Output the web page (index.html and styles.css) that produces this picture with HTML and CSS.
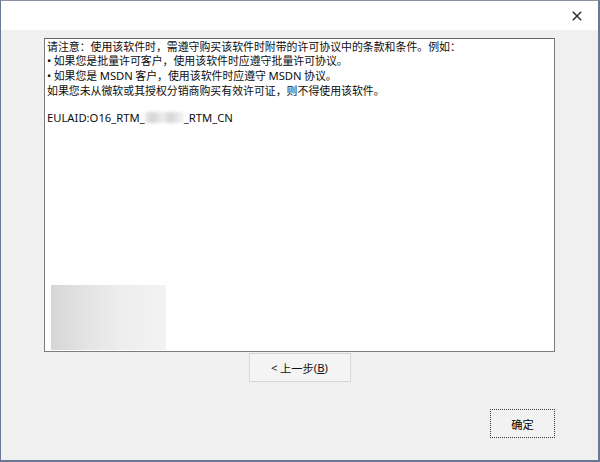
FILE: index.html
```html
<!DOCTYPE html>
<html lang="zh-CN">
<head>
<meta charset="utf-8">
<title>许可协议</title>
<link rel="stylesheet" href="styles.css">
</head>
<body>
<div class="window">
  <div class="titlebar">
    <button class="close" aria-label="关闭">
      <svg width="10" height="10" viewBox="0 0 10 10"><path d="M0.8 0.8 L9.2 9.2 M9.2 0.8 L0.8 9.2" stroke="#2b2b2b" stroke-width="1.4" fill="none"/></svg>
    </button>
  </div>
  <div class="content">
    <div class="textbox">
      <div class="text">
        <p>请注意：使用该软件时，需遵守购买该软件时附带的许可协议中的条款和条件。例如：</p>
        <p><span class="latin">•</span> 如果您是批量许可客户，使用该软件时应遵守批量许可协议。</p>
        <p><span class="latin">•</span> 如果您是 <span class="latin">MSDN</span> 客户，使用该软件时应遵守 <span class="latin">MSDN</span> 协议。</p>
        <p>如果您未从微软或其授权分销商购买有效许可证，则不得使用该软件。</p>
        <p class="blank">&nbsp;</p>
        <p class="latin">EULAID:O16_RTM_<span class="redacted"></span>_RTM_CN</p>
      </div>
      <div class="picture"></div>
    </div>
    <div class="nav-row">
      <button class="btn back"><span class="latin">&lt;</span> 上一步<span class="latin">(<u>B</u>)</span></button>
    </div>
    <div class="footer">
      <button class="btn ok">确定</button>
    </div>
  </div>
</div>
</body>
</html>
```

FILE: styles.css
```css
* { box-sizing: border-box; }
html, body { margin: 0; padding: 0; }
body {
  width: 600px;
  height: 462px;
  background: #f0f0f0;
  font-family: "Noto Sans CJK SC", "Noto Sans", sans-serif;
  color: #111;
}
.window {
  width: 600px;
  height: 462px;
  display: flex;
  flex-direction: column;
  border: 1px solid #6b7894;
  border-right-width: 2px;
  border-bottom-width: 2px;
  border-top-color: #8a93a3;
  background: #f0f0f0;
}
.titlebar {
  height: 29px;
  flex: none;
  background: #ffffff;
  display: flex;
  justify-content: flex-end;
  align-items: center;
  padding-right: 16px;
}
.close {
  border: 0;
  background: transparent;
  padding: 0;
  width: 10px;
  height: 10px;
  display: flex;
}
.content {
  flex: 1;
  display: flex;
  flex-direction: column;
  padding: 8px 43px 0 43px;
}
.textbox {
  height: 314px;
  flex: none;
  background: #ffffff;
  border: 1px solid #7c7c7c;
  border-top-color: #666;
  display: flex;
  flex-direction: column;
}
.text {
  padding: 0 0 0 2px;
  font-size: 10.9px;
  line-height: 14px;
  color: #0d0d0d;
  text-spacing-trim: space-all;
}
.text p { margin: 0; white-space: nowrap; }
.latin { font-family: "Noto Sans", "Noto Sans CJK SC", sans-serif; }
.text .latin { font-size: 11.25px; }
.redacted {
  display: inline-block;
  width: 39px;
  height: 11px;
  vertical-align: -1px;
  background: linear-gradient(to right, #e8e8e8 0%, #d4d4d4 20%, #eeeeee 45%, #d6d6d6 65%, #e4e4e4 80%, #f4f4f4 100%);
  filter: blur(1.6px);
}
.picture {
  margin-top: auto;
  margin-left: 6px;
  margin-bottom: 1px;
  width: 115px;
  height: 65px;
  background: linear-gradient(to right, #d6d6d6 0%, #e3e3e3 30%, #ededed 60%, #f3f3f3 100%);
}
.nav-row {
  display: flex;
  justify-content: center;
  margin-top: 1px;
}
.btn {
  font-family: "Noto Sans CJK SC", "Noto Sans", sans-serif;
  font-size: 11.25px;
  color: #111;
  height: 29px;
  padding: 0;
  display: flex;
  align-items: center;
  justify-content: center;
}
.back {
  width: 102px;
  background: #f4f4f4;
  border: 1px solid #d8d8d8;
  white-space: pre;
}
.back u { text-decoration: underline; text-underline-offset: 1px; }
.footer {
  display: flex;
  justify-content: flex-end;
  margin-top: 27px;
}
.ok {
  width: 65px;
  background: #f2f2f2;
  border: 1px dotted #3a3a3a;
  color: #000;
}
```
